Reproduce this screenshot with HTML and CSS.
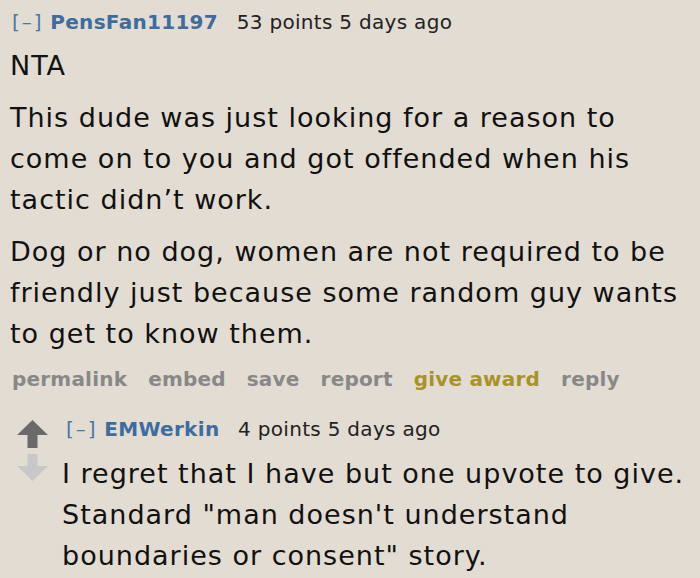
FILE: index.html
```html
<!DOCTYPE html>
<html>
<head>
<meta charset="utf-8">
<link rel="stylesheet" href="styles.css">
</head>
<body>
<div class="comment">
  <div class="tagline">
    <span class="expand">[–]</span>
    <span class="author">PensFan11197</span>
    <span class="score">53 points</span> <span class="time">5 days ago</span>
  </div>
  <div class="md">
    <p>NTA</p>
    <p>This dude was just looking for a reason to come on to you and got offended when his tactic didn’t work.</p>
    <p>Dog or no dog, women are not required to be friendly just because some random guy wants to get to know them.</p>
  </div>
  <ul class="buttons">
    <li>permalink</li>
    <li>embed</li>
    <li>save</li>
    <li>report</li>
    <li class="award">give award</li>
    <li>reply</li>
  </ul>
  <div class="child">
    <div class="votes">
      <svg class="arrow" width="31" height="28" viewBox="0 0 31 28"><path d="M15.5 0 L31 15 L20.5 15 L20.5 28 L10.5 28 L10.5 15 L0 15 Z" fill="#6a6a6a"/></svg>
      <svg class="arrow down" width="31" height="27" viewBox="0 0 31 27"><path d="M10.5 0 L20.5 0 L20.5 12 L31 12 L15.5 27 L0 12 L10.5 12 Z" fill="#c8c8c8"/></svg>
    </div>
    <div class="entry">
      <div class="tagline">
        <span class="expand">[–]</span>
        <span class="author">EMWerkin</span>
        <span class="score">4 points</span> <span class="time">5 days ago</span>
      </div>
      <div class="md">
        <p>I regret that I have but one upvote to give. Standard "man doesn't understand boundaries or consent" story.</p>
      </div>
    </div>
  </div>
</div>
</body>
</html>
```
FILE: styles.css
```css
html, body {
  margin: 0;
  padding: 0;
  background: #e3dcd2;
}
body {
  font-family: "DejaVu Sans", Verdana, sans-serif;
  color: #111;
  width: 700px;
  height: 578px;
  overflow: hidden;
}
.comment {
  padding: 8px 0 0 10px;
  width: 688px;
}
.tagline {
  font-size: 20px;
  line-height: 28px;
  color: #222;
  letter-spacing: 0.3px;
  white-space: nowrap;
}
.expand {
  color: #4a78a8;
  letter-spacing: 2px;
  margin-left: 2px;
}
.author {
  color: #3e6c9f;
  font-weight: bold;
  margin-right: 12px;
}
.md p {
  font-size: 27px;
  line-height: 41px;
  letter-spacing: 1px;
  margin: 11px 0 0 0;
}
.md p:first-child {
  margin-top: 9px;
}
.buttons {
  list-style: none;
  margin: 11px 0 0 2px;
  padding: 0;
  display: flex;
  gap: 21px;
  font-size: 20px;
  font-weight: bold;
  color: #888;
  line-height: 28px;
  letter-spacing: 0.2px;
}
.buttons .award {
  color: #a8932a;
}
.child {
  display: flex;
  margin-top: 22px;
  padding-left: 7px;
}
.votes {
  display: flex;
  flex-direction: column;
  gap: 6px;
  width: 45px;
  flex: none;
  padding-top: 5px;
}
.entry {
  flex: 1;
  min-width: 0;
}
.entry .tagline .expand {
  margin-left: 4px;
}
.entry .md p:first-child {
  margin-top: 10px;
}
```
